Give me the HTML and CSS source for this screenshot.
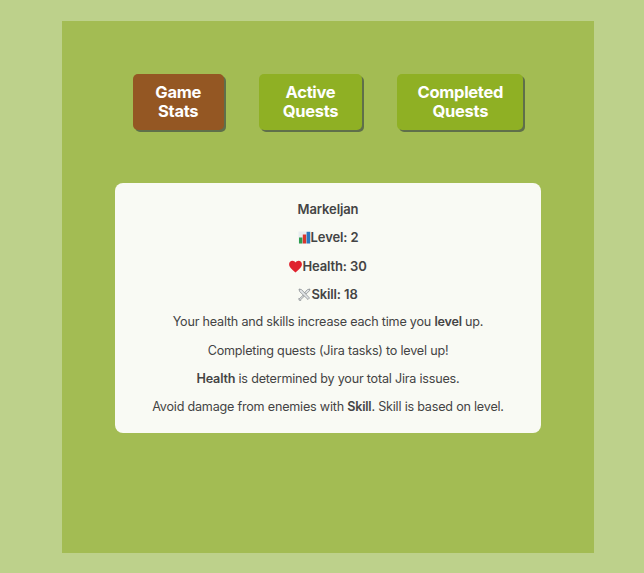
FILE: index.html
```html
<!DOCTYPE html>
<html lang="en">
<head>
<meta charset="utf-8">
<title>Game Stats</title>
<link rel="stylesheet" href="styles.css">
</head>
<body>
<main class="panel">
  <nav class="tabs">
    <button class="tab tab-active tab-stats">Game Stats</button>
    <button class="tab tab-active-quests">Active Quests</button>
    <button class="tab tab-completed">Completed Quests</button>
  </nav>
  <section class="card">
    <p class="stat">Markeljan</p>
    <p class="stat"><svg class="icon" viewBox="0 0 13 13"><rect x="0.5" y="0.5" width="12" height="12" fill="#e8edf0"/><rect x="1" y="6.500" width="3.400" height="6" fill="#2e9e4f"/><rect x="4.800" y="3.500" width="3.400" height="9" fill="#d9362e"/><rect x="8.600" y="0.800" width="3.600" height="11.700" fill="#2a78c0"/></svg>Level: 2</p>
    <p class="stat"><svg class="icon" viewBox="0 0 13 13"><path d="M6.500 12.400C3.500 9.800.1 7.400.1 4.200.1 2.200 1.600.7 3.400.7c1.300 0 2.500.7 3.100 1.900C7.100 1.400 8.300.7 9.600.7c1.800 0 3.300 1.500 3.300 3.500 0 3.200-3.400 5.600-6.400 8.200z" fill="#e0222e"/></svg>Health: 30</p>
    <p class="stat"><svg class="icon" viewBox="0 0 13 13"><path d="M1 1l2.500.6 8 8.400-1.500 1.500-8.400-8zM12 1L9.500 1.600 6.900 4.300l1.500 1.500 3-3zM5 7.400l-3.400 3.100-.8-.1.300 1.800 1.700.2-.1-.8L6 8.500z" fill="#e3e6e8" stroke="#6a6f73" stroke-width=".6"/></svg>Skill: 18</p>
    <p>Your health and skills increase each time you <strong>level</strong> up.</p>
    <p>Completing quests (Jira tasks) to level up!</p>
    <p><strong>Health</strong> is determined by your total Jira issues.</p>
    <p>Avoid damage from enemies with <strong>Skill</strong>. Skill is based on level.</p>
  </section>
</main>
</body>
</html>
```
FILE: styles.css
```css
* { box-sizing: border-box; }
html, body { height: 100%; }
body {
  margin: 0;
  background: #bdd18b;
  font-family: Inter, "Liberation Sans", sans-serif;
  padding: 21px 0 0 62px;
}
.panel {
  width: 532px;
  height: 532px;
  background: #a3bc53;
  display: flex;
  flex-direction: column;
  align-items: center;
  padding-top: 53px;
}
.tabs {
  width: 426px;
  display: flex;
  justify-content: space-around;
}
.tab {
  height: 56px;
  border: 0;
  border-radius: 5px;
  background: #8fb024;
  color: #fff;
  font: 700 16.5px/19.5px Inter, "Liberation Sans", sans-serif;
  letter-spacing: -0.3px;
  box-shadow: 2px 2px 0 #5f6f4a;
  padding: 0 18px;
}
.tab-active { background: #945723; }
.tab-stats { width: 91px; }
.tab-active-quests { width: 103px; }
.tab-completed { width: 126px; }
.card {
  width: 426px;
  height: 250px;
  margin-top: 53px;
  padding: 18px 10px 0;
  background: #f9faf4;
  border-radius: 8px;
  color: #444;
  font-size: 12.6px;
  letter-spacing: -0.21px;
  line-height: 16px;
  text-align: center;
}
.card p { margin: 0 0 12.33px; }
.card .stat {
  font-size: 13px;
  letter-spacing: -0.12px;
  font-weight: 600;
  line-height: 16px;
  margin-bottom: 12.33px;
}
.icon {
  width: 13px;
  height: 13px;
  vertical-align: -2px;
}
strong { font-weight: 600; }
```
